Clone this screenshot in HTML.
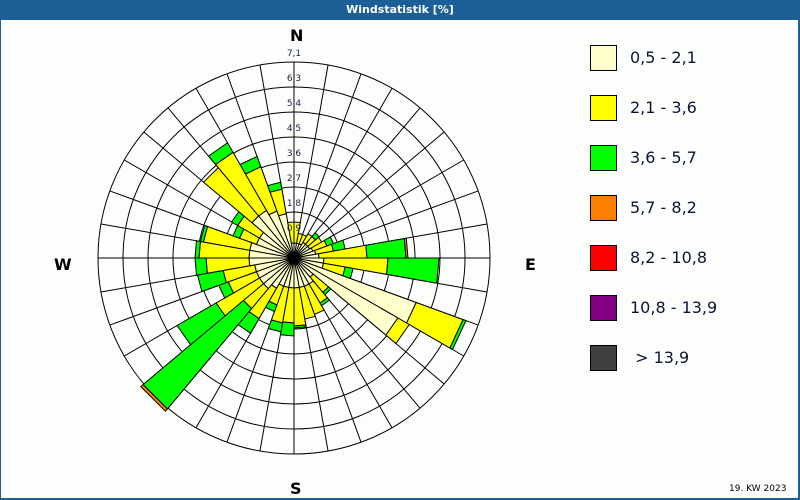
<!DOCTYPE html>
<html><head><meta charset="utf-8"><style>
html,body{margin:0;padding:0;}
body{width:800px;height:500px;overflow:hidden;background:#1c5f96;position:relative;font-family:"DejaVu Sans","Liberation Sans",sans-serif;}
#hdr{position:absolute;left:0;top:0;width:800px;height:20px;color:#fff;font-size:11px;font-weight:bold;text-align:center;line-height:20px;}
#main{position:absolute;left:1px;top:20px;width:797px;height:478px;background:#fcfefc;}
svg{position:absolute;left:0;top:0;}
.lg{position:absolute;left:590px;width:25px;height:24px;border:1px solid #000;}
.lt{position:absolute;left:630px;font-size:16px;color:#111133;font-family:"DejaVu Sans",sans-serif;}
.c{position:absolute;font-weight:bold;font-size:16px;color:#000;}
</style></head><body>
<div id="hdr">Windstatistik [%]</div>
<div id="main"></div>
<svg id="s" width="800" height="500" xmlns="http://www.w3.org/2000/svg">
<g id="grid" fill="none" stroke="#000" stroke-width="1"></g>
<g id="bars"></g>
<g font-family="DejaVu Sans, sans-serif" font-size="9" fill="#222244" text-anchor="middle">
<text x="294" y="56">7,1</text><text x="294" y="81">6,3</text><text x="294" y="106">5,4</text>
<text x="294" y="131">4,5</text><text x="294" y="156">3,6</text><text x="294" y="181">2,7</text>
<text x="294" y="206">1,8</text><text x="294" y="231">0,9</text>
</g>
</svg>
<div class="c" style="left:290px;top:26px;">N</div>
<div class="c" style="left:54px;top:255px;">W</div>
<div class="c" style="left:525px;top:255px;">E</div>
<div class="c" style="left:290px;top:479px;">S</div>
<div class="lg" style="top:45px;background:#ffffcc"></div><div class="lt" style="top:48px">0,5 - 2,1</div>
<div class="lg" style="top:95px;background:#ffff00"></div><div class="lt" style="top:98px">2,1 - 3,6</div>
<div class="lg" style="top:145px;background:#00ff00"></div><div class="lt" style="top:148px">3,6 - 5,7</div>
<div class="lg" style="top:195px;background:#ff8000"></div><div class="lt" style="top:198px">5,7 - 8,2</div>
<div class="lg" style="top:245px;background:#ff0000"></div><div class="lt" style="top:248px">8,2 - 10,8</div>
<div class="lg" style="top:295px;background:#800080"></div><div class="lt" style="top:298px">10,8 - 13,9</div>
<div class="lg" style="top:345px;background:#404040"></div><div class="lt" style="top:348px">&nbsp;&gt; 13,9</div>
<div style="position:absolute;left:729px;top:484px;font-size:9px;color:#000;">19. KW 2023</div>
<script>
var cx=294,cy=258,ns="http://www.w3.org/2000/svg";
var g=document.getElementById('grid'),b=document.getElementById('bars');
function el(p,t,a){var e=document.createElementNS(ns,t);for(var k in a)e.setAttribute(k,a[k]);p.appendChild(e);return e;}
[21,46,71,96,121,146,171,196].forEach(function(r){el(g,'circle',{cx:cx,cy:cy,r:r});});
for(var a=0;a<360;a+=10){var t=a*Math.PI/180;el(g,'line',{x1:cx,y1:cy,x2:cx+196*Math.sin(t),y2:cy-196*Math.cos(t)});}
var cols=['#ffffcc','#ffff00','#00ff00','#ff8000'];
var D=[[5,15,36],[15,15,25],[25,15,25],[35,18,28],[45,18,28,33],[55,18,32],[65,20,35,42],[75,22,40,52],
[85,25,73,112,114],[95,30,94,145],[105,30,52,60],[115,130,180,183],[125,120,133],[135,25,45,48],[145,30,52,55],
[155,30,60],[165,30,62],[175,30,68,70],[185,30,65,78],[195,30,66,75],[205,30,50,57],[215,35,70,87],
[225,40,66,197,200],[235,40,90,135],[245,40,70,80],[255,40,72,98],[265,45,88,99],[275,45,95,99],[285,45,92,95],
[295,40,58,65],[305,40,65,72],[315,55,118],[325,55,122,133],[335,50,97,108],[345,45,70,77],[355,15,36]];
function pt(r,a){var t=a*Math.PI/180;return (cx+r*Math.sin(t)).toFixed(1)+','+(cy-r*Math.cos(t)).toFixed(1);}
D.forEach(function(d){var a=d[0],r0=0;for(var i=1;i<d.length;i++){var r1=d[i];
var p=[pt(r0,a-5),pt(r1,a-5),pt(r1,a+5),pt(r0,a+5)].join(' ');
el(b,'polygon',{points:p,fill:cols[i-1],stroke:'#000','stroke-width':1});r0=r1;}});
</script>
</body></html>
